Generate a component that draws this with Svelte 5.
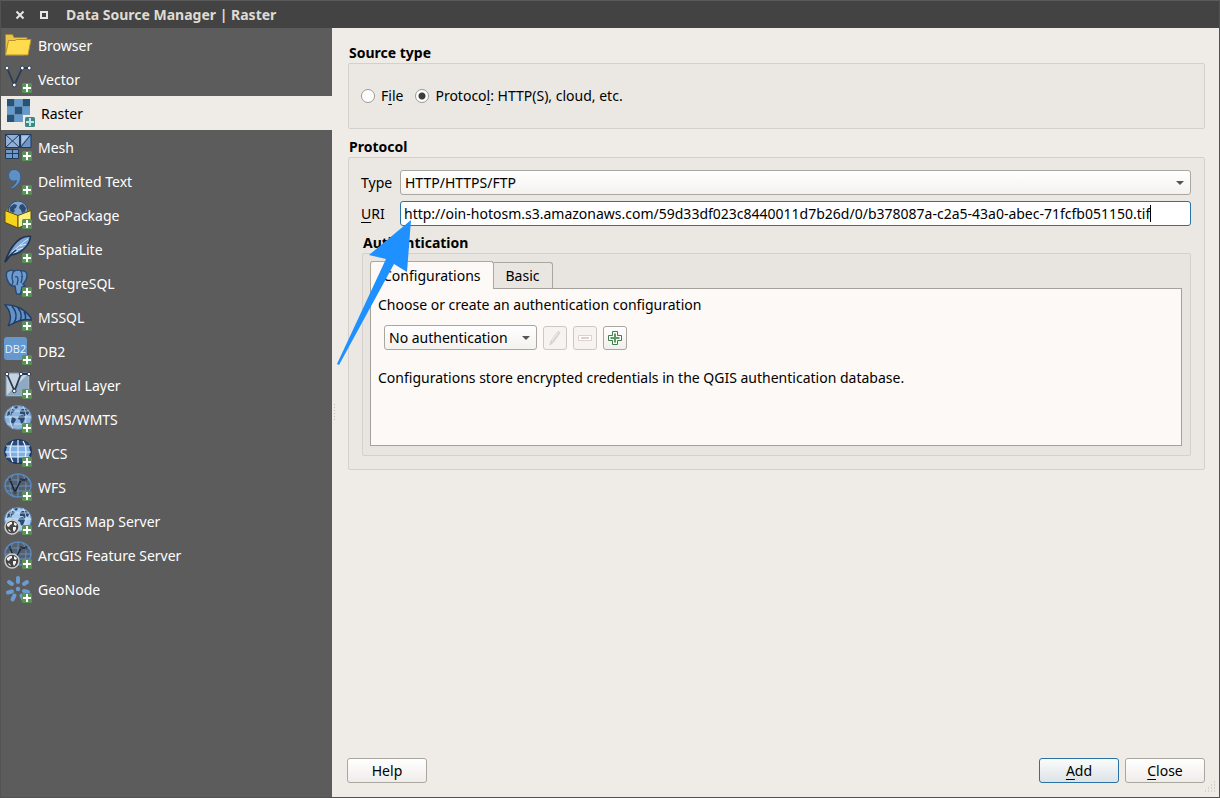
<script lang="ts">
	const sources = [
		{ id: 'browser', label: 'Browser' },
		{ id: 'vector', label: 'Vector' },
		{ id: 'raster', label: 'Raster' },
		{ id: 'mesh', label: 'Mesh' },
		{ id: 'text', label: 'Delimited Text' },
		{ id: 'geopackage', label: 'GeoPackage' },
		{ id: 'spatialite', label: 'SpatiaLite' },
		{ id: 'postgres', label: 'PostgreSQL' },
		{ id: 'mssql', label: 'MSSQL' },
		{ id: 'db2', label: 'DB2' },
		{ id: 'virtual', label: 'Virtual Layer' },
		{ id: 'wms', label: 'WMS/WMTS' },
		{ id: 'wcs', label: 'WCS' },
		{ id: 'wfs', label: 'WFS' },
		{ id: 'arcmap', label: 'ArcGIS Map Server' },
		{ id: 'arcfeature', label: 'ArcGIS Feature Server' },
		{ id: 'geonode', label: 'GeoNode' }
	];

	let active = $state('raster');
	let sourceType = $state('protocol');
	let tab = $state('config');
	let uri = $state(
		'http://oin-hotosm.s3.amazonaws.com/59d33df023c8440011d7b26d/0/b378087a-c2a5-43a0-abec-71fcfb051150.tif'
	);
</script>

{#snippet land()}
	<path
		d="M4 6l4-2 3 1-1 2-2 1-1 3-2-1-2 1zM8 12l3 1 1 2-2 3-1 3-2-4zM10 2l3-1 1 1-2 2zM16 6l2-2 4 0 3 3-1 3-2-1-1 3-2-3-3 0zM15 11l4-1 2 3-2 5-2 1-1-4-2-1z"
		fill="#2d4a70"
	/>
{/snippet}

{#snippet smallGlobe()}
	<circle cx="8" cy="20" r="7" fill="#454545" stroke="#cfcfcf" stroke-width="1.400" />
	<path d="M3 17l3-2 2 0 0 2-2 1-1 2-2-1zM10 15l3 2-1 2-2-1zM9 20l3 0 0 2-2 3-1-2zM4 22l2 1 1 2-2-1z" fill="#f2f2f2" />
{/snippet}

{#snippet icon(id: string)}
	<svg class="icon" viewBox="0 0 28 28" width="28" height="28" aria-hidden="true">
		{#if id == 'browser'}
			<path d="M1.500 24V3.500h7l1.500 3h13v4L20 24z" fill="#e9c34b" stroke="#a8882a" />
			<path d="M1.500 24L4.500 9.500H11l1.500-1H27L24 24z" fill="#ffdb4d" stroke="#b3922f" />
		{:else if id == 'vector'}
			<path d="M3 3L10.300 20 18.300 3h7" fill="none" stroke="#2c3e55" stroke-width="1.800" />
			{#each [[3, 3], [10.3, 20], [18.3, 3], [25.3, 3]] as [cx, cy]}
				<circle {cx} {cy} r="1.900" fill="#fff" stroke="#2c3e55" />
			{/each}
		{:else if id == 'raster'}
			<path d="M0 0h23v23H0z" fill="#6399cc" />
			<path d="M0 0h7.500v7.500H0zM15.500 0H23v7.500h-7.500zM7.500 7.500h8v8h-8zM0 15.500h7.500V23H0z" fill="#275379" />
			<path d="M7.500 0v23M15.500 0v23M0 7.500h23M0 15.500h23" stroke="#7fa6c8" stroke-width=".5" />
			<path d="M16 16h12v12H16z" fill="#f0ece7" />
		{:else if id == 'mesh'}
			<g fill="#6f98c8" stroke="#213a5b">
				<path d="M1.500 1.500h14v13h-14zM16.500 14.500v-13H27v13zM1.500 16.500h13v9h-13z" />
				<path d="M1.500 1.500h14v13h-14z" fill="#8fb1da" />
				<path d="M17.500 2.500H25l-7.500 9z" fill="#a9c6e6" stroke="none" />
				<path d="M1.500 1.500l14 13M15.500 1.500l-14 13M16.500 14.500L27 1.500M8.500 16.500v9M1.500 20.500h13" fill="none" />
			</g>
		{:else if id == 'text'}
			<path
				d="M10 2.500c4 0 6.800 2.800 6.800 7.200 0 5.500-3.500 10-9.300 12.300l-1-1.600c3.500-1.700 5.600-4 5.900-6.900-.8.500-1.700.7-2.700.7-3.200 0-5.200-2.500-5.200-5.700 0-3.400 2.300-6 5.500-6z"
				fill="#5f8fc3"
				stroke="#355c8a"
			/>
		{:else if id == 'geopackage'}
			<path d="M1 9.500l5-3h16l5 3-12 5z" fill="#8d7a16" />
			<circle cx="14" cy="9.500" r="9.500" fill="#7fa6d0" stroke="#2c4a72" />
			<path d="M6 6l4-3 3 1-1 3-2 1 1 2-2 2-3-2zM16 4l3-1 3 4-1 4-3 1-1-3-2-2z" fill="#2d4a70" />
			<path d="M1 9.500l13 5V27L1 21.500z" fill="#f6d31c" stroke="#5b4b0a" />
			<path d="M14 14.500l13-5v12L14 27z" fill="#fff07c" stroke="#5b4b0a" />
		{:else if id == 'spatialite'}
			<path d="M1 27C4 18 9 9 16 4c4-2.500 8-3 10.500-2.500C26 7 22 13 16 17c-3.500 2-7 3-9.500 3C4.500 22 3 25 1 27z" fill="#7da7d6" stroke="#1e3450" stroke-width="1.600" />
			<path d="M8 17c5-4 11-10 16-13M9 18l5-2M13 15l6-2M16 11l6-2" fill="none" stroke="#dbe9f7" />
			<path d="M1 27c3-4 6-8 11-12" fill="none" stroke="#1e3450" stroke-width="1.600" />
		{:else if id == 'postgres'}
			<path
				d="M3 3c2-2 5-2 7-1 3-1 6-1 7 0 3-1 6 1 6 4 0 4-2 7-4 9l2 2-3 1-1 5c0 3-5 3-5 0l-1-6-3 0C4 15 1 7 3 3z"
				fill="#6d9bd0"
				stroke="#294a73"
				stroke-width="1.500"
			/>
			<path d="M10 2c-3 4-2 8-1 11l-1 3M17 2c2 4 1 9 0 12M11 8c2-1 3 0 3 3l-1 5M19 7l-2 1" fill="none" stroke="#294a73" stroke-width="1.300" />
		{:else if id == 'mssql'}
			<path d="M1 2c9-1 20 4 26 13l0 2c-7-2-14 1-23 6C8 17 7 8 1 2z" fill="#6292c8" stroke="#203d63" stroke-width="1.400" />
			<path d="M8 3c5 6 5 12 2 17M14 5c4 5 4 9 2 13M20 9c2 3 2 5 1 8" fill="none" stroke="#203d63" stroke-width="1.500" />
		{:else if id == 'db2'}
			<rect x="0" y="0" width="23" height="23" rx="3" fill="#6598cf" />
			<text x="11.500" y="16" text-anchor="middle" class="db2">DB2</text>
		{:else if id == 'virtual'}
			<path d="M2 2h23v23H2z" fill="#c5d3e0" stroke="#7891aa" />
			<path d="M3 24L24 3v21z" fill="#8fa9c2" />
			<path d="M3 3l7.500 17L17 3h8" fill="none" stroke="#26384d" stroke-width="1.800" />
			{#each [[3, 3], [10.3, 20], [17, 3], [25, 3]] as [cx, cy]}
				<circle {cx} {cy} r="1.800" fill="#fff" stroke="#26384d" />
			{/each}
		{:else if id == 'wms' || id == 'arcmap'}
			<ellipse cx="14" cy="12.500" rx="13.500" ry="12" fill={id == 'wms' ? '#8fb5de' : '#a9cdf0'} stroke="#5f86b4" />
			{@render land()}
			<path d="M9 1c-4 7-4 16 0 23M19 1c4 7 4 16 0 23M1 12h26M3 6h22M3 19h22" fill="none" stroke="#d9e8f7" stroke-width=".7" />
		{:else if id == 'wcs'}
			<ellipse cx="14" cy="12.500" rx="13" ry="11.500" fill="#7fb0e5" stroke="#1d3a63" stroke-width="2" />
			<path d="M2 7c7-7 17-7 24 0zM2 18c7 7 17 7 24 0z" fill="#284b7d" />
			<path d="M14 1v23M9 2C5 8 5 17 9 23M19 2c4 6 4 15 0 21M2 7h24M1 13h26M2 18h24" fill="none" stroke="#e6f1fc" stroke-width="1.200" />
		{:else if id == 'wfs' || id == 'arcfeature'}
			<ellipse cx="14" cy="12.500" rx="13" ry="11.500" fill="#55606d" stroke="#5787bd" stroke-width="1.500" />
			<path d="M14 1v23M9 2C5 8 5 17 9 23M19 2c4 6 4 15 0 21M2 7h24M1 13h26M2 18h24" fill="none" stroke="#6f9bcc" stroke-width=".8" />
			<path d="M6 7l5 12 6-12h5" fill="none" stroke="#172433" stroke-width="1.500" />
			{#each [[6, 7], [11, 19], [17, 7], [22, 7]] as [cx, cy]}
				<circle {cx} {cy} r="1.400" fill="#101820" />
				<circle {cx} {cy} r=".6" fill="#dce6f0" />
			{/each}
		{:else if id == 'geonode'}
			<circle cx="14" cy="14" r="2.200" fill="#6a9bd1" />
			<path d="M14 3v4M5 7l3 2M23 7l-3 2M4 17.500l4-1M24 17l-4-1M8.500 24.500l2-4M19.500 24.500l-2-4" stroke="#6a9bd1" stroke-width="4" stroke-linecap="round" />
		{/if}
		{#if id == 'arcmap' || id == 'arcfeature'}
			{@render smallGlobe()}
		{/if}
		{#if id != 'browser'}
			<rect x="18" y="18" width="10" height="10" rx="1.500" fill={id == 'raster' ? '#3f8a80' : '#5a9158'} />
			<path d="M23 19v8M19 23h8" stroke={id == 'raster' ? '#c3e2ee' : '#fff'} stroke-width="2" />
		{/if}
	</svg>
{/snippet}

<div class="window">
	<header>
		<button class="wm" aria-label="Close window">
			<svg viewBox="0 0 10 10" width="10" height="10"><path d="M1.500 1.500l7 7M8.500 1.500l-7 7" stroke="#e8e6e3" stroke-width="2" /></svg>
		</button>
		<button class="wm" aria-label="Maximize window">
			<svg viewBox="0 0 10 10" width="10" height="10"><path d="M2 2h6v6H2z" fill="none" stroke="#e8e6e3" stroke-width="2" /></svg>
		</button>
		<h1>Data Source Manager | Raster</h1>
	</header>
	<div class="body">
		<nav>
			{#each sources as source}
				<button class="source" class:active={active == source.id} onclick={() => (active = source.id)}>
					{@render icon(source.id)}
					<span>{source.label}</span>
				</button>
			{/each}
		</nav>
		<div class="splitter"></div>
		<main>
			<section>
				<h2>Source type</h2>
				<div class="group types">
					<label><input type="radio" bind:group={sourceType} value="file" />F<u>i</u>le</label>
					<label><input type="radio" bind:group={sourceType} value="protocol" />Protoco<u>l</u>: HTTP(S), cloud, etc.</label>
				</div>
			</section>
			<section>
				<h2>Protocol</h2>
				<div class="group protocol">
					<div class="field">
						<label for="type">Type</label>
						<div class="combo">
							<select id="type"><option>HTTP/HTTPS/FTP</option></select>
						</div>
					</div>
					<div class="field">
						<label for="uri"><u>U</u>RI</label>
						<div class="uri">
							<input id="uri" type="text" bind:value={uri} />
							<i class="caret"></i>
							<svg class="arrow" viewBox="0 0 76 148" width="76" height="148" aria-hidden="true">
								<path d="M75 0L33 35l17 4L1 144l2 1L58 44l13 8z" fill="#1e90ff" />
							</svg>
						</div>
					</div>
					<h2 class="inner">Authentication</h2>
					<div class="group auth">
						<div class="tabs" role="tablist">
							<button role="tab" aria-selected={tab == 'config'} onclick={() => (tab = 'config')}>Configurations</button>
							<button role="tab" aria-selected={tab == 'basic'} onclick={() => (tab = 'basic')}>Basic</button>
						</div>
						<div class="pane" role="tabpanel">
							<label for="config">Choose or create an authentication configuration</label>
							<div class="config">
								<div class="combo small">
									<select id="config"><option>No authentication</option></select>
								</div>
								<button class="tool" disabled aria-label="Edit configuration">
									<svg viewBox="0 0 16 16" width="16" height="16"><path d="M3 15l1-4L11 1.500l2 1L6.500 12z" fill="#dcdad6" stroke="#d3d0cb" /><path d="M5 10.500L11.500 2" stroke="#f3f1ee" /></svg>
								</button>
								<button class="tool" disabled aria-label="Remove configuration">
									<svg viewBox="0 0 16 16" width="16" height="16"><path d="M1.500 5.500h13v5h-13z" fill="#fff" stroke="#dccfcf" /><path d="M4 8h8" stroke="#e2cccc" stroke-width="2" /></svg>
								</button>
								<button class="tool" aria-label="Add configuration">
									<svg viewBox="0 0 16 16" width="16" height="16"><path d="M5.500 1.500h5v4h4v5h-4v4h-5v-4h-4v-5h4z" fill="#fff" stroke="#3f7d48" /><path d="M8 3.500v9M3.500 8h9" stroke="#5d9a62" stroke-width="2" /></svg>
								</button>
							</div>
							<p>Configurations store encrypted credentials in the QGIS authentication database.</p>
						</div>
					</div>
				</div>
			</section>
			<footer>
				<button>Help</button>
				<button class="default"><u>A</u>dd</button>
				<button><u>C</u>lose</button>
			</footer>
			<svg class="grip" viewBox="0 0 12 12" width="12" height="12" aria-hidden="true">
				<path d="M10 1h1M7 4h1M10 4h1M4 7h1M7 7h1M10 7h1M1 10h1M4 10h1M7 10h1M10 10h1" stroke="#bab6b0" />
			</svg>
		</main>
	</div>
</div>

<style>
	:global(body) {
		margin: 0;
	}
	.window {
		display: flex;
		flex-direction: column;
		min-height: 100vh;
		box-sizing: border-box;
		border: 1px solid #525252;
		border-top-color: #5a5a5a;
		background: #efebe7;
		color: #000;
		font: 14px/20px 'Noto Sans', sans-serif;
	}
	button,
	input,
	select {
		font: inherit;
		color: inherit;
	}
	header {
		display: flex;
		align-items: center;
		height: 27px;
		padding-left: 7px;
		background: #434343;
	}
	.wm {
		display: flex;
		justify-content: center;
		width: 24px;
		padding: 0;
		border: 0;
		background: none;
	}
	h1 {
		margin: 0 0 0 10px;
		color: #dfdbd2;
		font-size: 14px;
	}
	h2 {
		margin: 0;
		padding-left: 1px;
		font-size: 14px;
		line-height: 20px;
	}
	u {
		text-underline-offset: 3px;
	}
	.body {
		display: flex;
		flex: 1;
	}
	nav {
		width: 331px;
		flex: none;
		background: #5c5c5c;
	}
	.source {
		display: flex;
		align-items: center;
		gap: 6px;
		width: 100%;
		height: 34px;
		padding: 0 3px;
		border: 0;
		background: none;
		color: #fff;
		text-align: left;
	}
	.source.active {
		padding-left: 6px;
		background: #efebe7;
		color: #000;
	}
	.source span {
		padding-top: 2px;
	}
	.icon {
		flex: none;
	}
	.db2 {
		font: 11px 'Open Sans', sans-serif;
		fill: #e8f1fa;
	}
	.splitter {
		align-self: center;
		width: 1px;
		height: 17px;
		margin: 0 5px 0 2px;
		background: repeating-linear-gradient(#c0bcb6 0 1px, transparent 1px 3px);
	}
	main {
		position: relative;
		display: flex;
		flex: 1;
		flex-direction: column;
		min-width: 0;
		padding: 15px 14px 14px 8px;
	}
	section {
		margin-bottom: 8px;
	}
	.group {
		box-sizing: border-box;
		border: 1px solid #d4d0cb;
		border-radius: 2px;
		background: #ebe8e3;
	}
	.types {
		display: flex;
		align-items: center;
		gap: 12px;
		height: 66px;
		padding: 0 12px;
	}
	.types label {
		display: flex;
		align-items: center;
		white-space: pre;
	}
	input[type='radio'] {
		appearance: none;
		width: 14px;
		height: 14px;
		margin: 0 6px 0 0;
		border: 1px solid #9c9893;
		border-radius: 50%;
		background: #fff;
	}
	input[type='radio']:checked {
		background: radial-gradient(circle, #3c3c3c 3px, #fff 4px);
	}
	.protocol {
		padding: 12px 13px 13px 12px;
	}
	.field {
		display: flex;
		align-items: center;
		margin-bottom: 6px;
	}
	.field label {
		width: 39px;
		flex: none;
	}
	.combo,
	.uri {
		position: relative;
		flex: 1;
	}
	.combo::after {
		content: '';
		position: absolute;
		top: 11px;
		right: 7px;
		border: 4px solid transparent;
		border-top-color: #555;
		border-bottom: 0;
		pointer-events: none;
	}
	select,
	.uri {
		box-sizing: border-box;
		height: 25px;
		border: 1px solid #aaa6a0;
		border-radius: 3px;
	}
	select {
		display: block;
		appearance: none;
		width: 100%;
		padding: 0 4px;
		background: linear-gradient(#fff, #f4f2ef);
	}
	.uri {
		display: flex;
		align-items: center;
		min-width: 0;
		padding: 0 3px;
		border-color: #2a72a5;
		background: #fff;
	}
	.uri input {
		field-sizing: content;
		min-width: 0;
		padding: 0;
		border: 0;
		background: none;
		outline: none;
	}
	.caret {
		flex: none;
		width: 1px;
		height: 17px;
		background: #000;
	}
	.arrow {
		position: absolute;
		z-index: 2;
		top: 18px;
		left: -65px;
		pointer-events: none;
	}
	.inner {
		padding: 1px 0 0 2px;
	}
	.auth {
		margin-left: 1px;
		padding: 7px 8px 9px 7px;
		background: #e8e5e0;
	}
	.tabs {
		display: flex;
		align-items: flex-end;
	}
	.tabs button {
		height: 26px;
		padding: 0 12px;
		border: 1px solid #aaa6a0;
		border-left: 0;
		border-bottom: 0;
		border-radius: 0 3px 0 0;
		background: #e9e6e2;
	}
	.tabs button[aria-selected='true'] {
		height: 28px;
		margin-bottom: -1px;
		border-left: 1px solid #aaa6a0;
		border-radius: 3px 3px 0 0;
		background: #fdf9f6;
		z-index: 1;
	}
	.pane {
		box-sizing: border-box;
		min-height: 158px;
		padding: 6px 7px;
		border: 1px solid #a5a19c;
		background: #fdf9f6;
	}
	.config {
		display: flex;
		align-items: center;
		gap: 6px;
		margin: 10px 0 18px 6px;
	}
	.small {
		width: 153px;
		flex: none;
	}
	.tool {
		display: flex;
		align-items: center;
		justify-content: center;
		width: 24px;
		height: 24px;
		padding: 0;
		border: 1px solid #aaa6a0;
		border-radius: 3px;
		background: linear-gradient(#fff, #f1efec);
	}
	.tool:disabled {
		border-color: #ccc9c4;
		background: #f6f3f0;
	}
	p {
		margin: 0;
	}
	footer {
		display: flex;
		gap: 6px;
		margin: auto 0 0 -1px;
	}
	footer button {
		width: 80px;
		height: 25px;
		padding: 0;
		border: 1px solid #aaa6a0;
		border-radius: 3px;
		background: linear-gradient(#fff, #efedea);
	}
	footer .default {
		margin-left: auto;
		border-color: #2a72a5;
		background: linear-gradient(#fbfcfc, #dde3e6);
	}
	.grip {
		position: absolute;
		right: 3px;
		bottom: 4px;
	}
</style>
